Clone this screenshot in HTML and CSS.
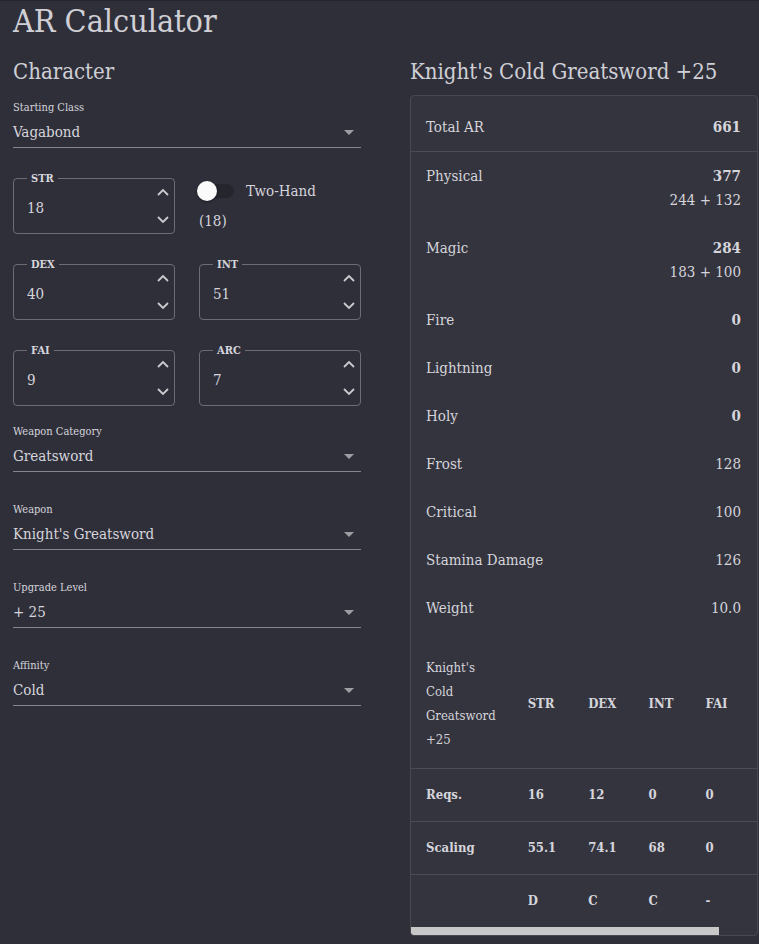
FILE: index.html
```html
<!DOCTYPE html>
<html lang="en">
<head>
<meta charset="utf-8">
<title>AR Calculator</title>
<link rel="stylesheet" href="styles.css">
</head>
<body>
<div class="page">
  <h1 class="title">AR Calculator</h1>
  <div class="columns">
    <section class="col">
      <h2 class="heading">Character</h2>

      <div class="select first">
        <div class="select-label">Starting Class</div>
        <div class="select-value"><span>Vagabond</span><span class="caret"></span></div>
      </div>

      <div class="stats">
        <div class="num">
          <span class="num-label">STR</span>
          <span class="num-value">18</span>
          <span class="spin">
            <svg width="12" height="8" viewBox="0 0 12 8"><polyline points="1,7 6,2 11,7" /></svg>
            <svg width="12" height="8" viewBox="0 0 12 8"><polyline points="1,1 6,6 11,1" /></svg>
          </span>
        </div>
        <div class="twohand">
          <div class="toggle-row">
            <span class="switch"><span class="track"></span><span class="thumb"></span></span>
            <span class="toggle-label">Two-Hand</span>
          </div>
          <div class="twohand-note">(18)</div>
        </div>
        <div class="num">
          <span class="num-label">DEX</span>
          <span class="num-value">40</span>
          <span class="spin">
            <svg width="12" height="8" viewBox="0 0 12 8"><polyline points="1,7 6,2 11,7" /></svg>
            <svg width="12" height="8" viewBox="0 0 12 8"><polyline points="1,1 6,6 11,1" /></svg>
          </span>
        </div>
        <div class="num">
          <span class="num-label">INT</span>
          <span class="num-value">51</span>
          <span class="spin">
            <svg width="12" height="8" viewBox="0 0 12 8"><polyline points="1,7 6,2 11,7" /></svg>
            <svg width="12" height="8" viewBox="0 0 12 8"><polyline points="1,1 6,6 11,1" /></svg>
          </span>
        </div>
        <div class="num">
          <span class="num-label">FAI</span>
          <span class="num-value">9</span>
          <span class="spin">
            <svg width="12" height="8" viewBox="0 0 12 8"><polyline points="1,7 6,2 11,7" /></svg>
            <svg width="12" height="8" viewBox="0 0 12 8"><polyline points="1,1 6,6 11,1" /></svg>
          </span>
        </div>
        <div class="num">
          <span class="num-label">ARC</span>
          <span class="num-value">7</span>
          <span class="spin">
            <svg width="12" height="8" viewBox="0 0 12 8"><polyline points="1,7 6,2 11,7" /></svg>
            <svg width="12" height="8" viewBox="0 0 12 8"><polyline points="1,1 6,6 11,1" /></svg>
          </span>
        </div>
      </div>

      <div class="select after-stats">
        <div class="select-label">Weapon Category</div>
        <div class="select-value"><span>Greatsword</span><span class="caret"></span></div>
      </div>
      <div class="select">
        <div class="select-label">Weapon</div>
        <div class="select-value"><span>Knight's Greatsword</span><span class="caret"></span></div>
      </div>
      <div class="select">
        <div class="select-label">Upgrade Level</div>
        <div class="select-value"><span>+ 25</span><span class="caret"></span></div>
      </div>
      <div class="select">
        <div class="select-label">Affinity</div>
        <div class="select-value"><span>Cold</span><span class="caret"></span></div>
      </div>
    </section>

    <section class="col">
      <h2 class="heading">Knight's Cold Greatsword +25</h2>
      <div class="card">
        <ul class="ar-list">
          <li class="ar-row divided"><span>Total AR</span><span class="vals"><b>661</b></span></li>
          <li class="ar-row"><span>Physical</span><span class="vals"><b>377</b><span>244 + 132</span></span></li>
          <li class="ar-row"><span>Magic</span><span class="vals"><b>284</b><span>183 + 100</span></span></li>
          <li class="ar-row"><span>Fire</span><span class="vals"><b>0</b></span></li>
          <li class="ar-row"><span>Lightning</span><span class="vals"><b>0</b></span></li>
          <li class="ar-row"><span>Holy</span><span class="vals"><b>0</b></span></li>
          <li class="ar-row"><span>Frost</span><span class="vals"><span>128</span></span></li>
          <li class="ar-row"><span>Critical</span><span class="vals"><span>100</span></span></li>
          <li class="ar-row"><span>Stamina Damage</span><span class="vals"><span>126</span></span></li>
          <li class="ar-row"><span>Weight</span><span class="vals"><span>10.0</span></span></li>
        </ul>
        <div class="table-wrap">
          <table class="req-table">
            <thead>
              <tr><th class="name">Knight's Cold Greatsword +25</th><th>STR</th><th>DEX</th><th>INT</th><th>FAI</th><th>ARC</th></tr>
            </thead>
            <tbody>
              <tr><th>Reqs.</th><td>16</td><td>12</td><td>0</td><td>0</td><td>0</td></tr>
              <tr><th>Scaling</th><td>55.1</td><td>74.1</td><td>68</td><td>0</td><td>0</td></tr>
              <tr class="last"><th></th><td>D</td><td>C</td><td>C</td><td>-</td><td>-</td></tr>
            </tbody>
          </table>
        </div>
        <div class="hscroll"><div class="hscroll-thumb"></div></div>
      </div>
    </section>
  </div>
</div>
</body>
</html>
```

FILE: styles.css
```css
* { box-sizing: border-box; }

html, body {
  margin: 0;
  padding: 0;
  background: #2f2f3a;
}

body {
  color: #d5d5db;
  font-family: "DejaVu Serif Condensed", "DejaVu Serif", "Liberation Serif", serif;
  font-stretch: condensed;
  font-size: 15px;
  border-top: 1px solid #24242c;
}

.page {
  padding: 0 13px;
}

.title {
  margin: 0;
  font-size: 32px;
  font-weight: normal;
  line-height: 40px;
  color: #cfcfd5;
}

.columns {
  display: grid;
  grid-template-columns: 348px 348px;
  column-gap: 49px;
}

.heading {
  margin: 15px 0 0;
  font-size: 22px;
  font-weight: normal;
  line-height: 32px;
  color: #cfcfd5;
}

/* selects */
.select { margin-top: 30px; }
.select.first { margin-top: 12px; }
.select.after-stats { margin-top: 18px; }

.select-label {
  font-size: 11px;
  line-height: 16px;
}

.select-value {
  margin-top: 4px;
  display: flex;
  align-items: center;
  justify-content: space-between;
  line-height: 24px;
  padding-bottom: 3px;
  border-bottom: 1px solid #85858d;
}

.caret {
  width: 0;
  height: 0;
  margin-right: 7px;
  border-left: 5px solid transparent;
  border-right: 5px solid transparent;
  border-top: 5px solid #9d9da4;
}

/* stat inputs */
.stats {
  margin-top: 30px;
  display: grid;
  grid-template-columns: 162px 162px;
  column-gap: 24px;
  row-gap: 30px;
}

.num {
  position: relative;
  height: 56px;
  border: 1px solid #6c6c75;
  border-radius: 4px;
  display: flex;
  align-items: center;
  padding-left: 13px;
  padding-right: 5px;
}

.num-label {
  position: absolute;
  left: 13px;
  top: -7px;
  padding: 0 4px;
  background: #2f2f3a;
  font-size: 11px;
  font-weight: bold;
  line-height: 14px;
}

.num-value {
  flex: 1;
  line-height: 24px;
  padding-top: 3px;
}

.spin {
  align-self: stretch;
  display: flex;
  flex-direction: column;
  justify-content: space-between;
  padding: 9px 0;
}

.spin svg polyline {
  fill: none;
  stroke: #cacacf;
  stroke-width: 1.8;
}

.twohand {
  display: flex;
  flex-direction: column;
}

.toggle-row {
  display: flex;
  align-items: center;
  height: 26px;
  margin-left: -2px;
}

.switch {
  position: relative;
  width: 38px;
  height: 20px;
  flex: none;
}

.track {
  position: absolute;
  left: 3px;
  top: 3px;
  width: 34px;
  height: 14px;
  border-radius: 7px;
  background: #25252d;
}

.thumb {
  position: absolute;
  left: 0;
  top: 0;
  width: 20px;
  height: 20px;
  border-radius: 50%;
  background: #fafafa;
  box-shadow: 0 1px 3px rgba(0, 0, 0, 0.4);
}

.toggle-label {
  margin-left: 11px;
  line-height: 24px;
}

.twohand-note {
  margin-top: 7px;
  line-height: 20px;
}

/* card */
.card {
  margin-top: 7px;
  width: 348px;
  background: #34343e;
  border: 1px solid #484851;
  border-radius: 4px;
  overflow: hidden;
}

.ar-list {
  list-style: none;
  margin: 0;
  padding: 7px 0 8px;
}

.ar-row {
  display: flex;
  justify-content: space-between;
  align-items: flex-start;
  padding: 12px 16px 12px 15px;
  line-height: 24px;
}

.ar-row.divided {
  border-bottom: 1px solid #4c4c56;
}

.vals {
  display: flex;
  flex-direction: column;
  align-items: flex-end;
}

.vals b { font-weight: bold; }

.table-wrap {
  overflow: hidden;
}

.req-table {
  border-collapse: collapse;
  font-size: 13px;
}

.req-table th,
.req-table td {
  padding: 16px;
  text-align: left;
  vertical-align: middle;
  border-bottom: 1px solid #4c4c56;
  line-height: 20px;
  white-space: nowrap;
}

.req-table th:first-child {
  padding-left: 15px;
}

.req-table thead th {
  line-height: 24px;
}

.req-table thead th.name {
  font-weight: normal;
  white-space: normal;
  width: 1px;
}

.req-table td,
.req-table th { font-weight: bold; }

.req-table tr.last th,
.req-table tr.last td {
  border-bottom: none;
}

.hscroll {
  height: 8px;
}

.hscroll-thumb {
  width: 308px;
  height: 8px;
  background: #c8c8c8;
}
```
